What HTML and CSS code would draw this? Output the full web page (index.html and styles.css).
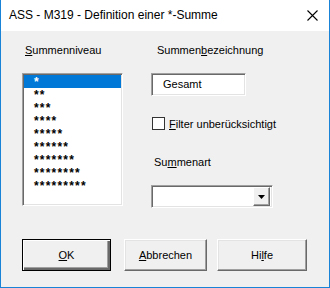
FILE: index.html
```html
<!DOCTYPE html>
<html lang="de">
<head>
  <meta charset="UTF-8">
  <title>ASS - M319</title>
  <link rel="stylesheet" href="styles.css">
</head>
<body>
  <div class="window">
    <div class="titlebar">
      <span class="title">ASS - M319 - Definition einer *-Summe</span>
      <svg class="close" width="11" height="11" viewBox="0 0 11 11">
        <path d="M0.5 0.5 L10.5 10.5 M10.5 0.5 L0.5 10.5" stroke="#000" stroke-width="1.1" fill="none"/>
      </svg>
    </div>

    <div class="client">
      <div class="main">
        <div class="col-left">
          <div class="label lbl-niveau"><u>S</u>ummenniveau</div>
          <div class="listbox">
            <div class="item selected">*</div>
            <div class="item">**</div>
            <div class="item">***</div>
            <div class="item">****</div>
            <div class="item">*****</div>
            <div class="item">******</div>
            <div class="item">*******</div>
            <div class="item">********</div>
            <div class="item">*********</div>
          </div>
        </div>

        <div class="col-right">
          <div class="label lbl-bez">Summen<u>b</u>ezeichnung</div>
          <div class="textbox">Gesamt</div>
          <label class="check">
            <span class="box"></span>
            <span><u>F</u>ilter unberücksichtigt</span>
          </label>
          <div class="label lbl-art">Su<u>m</u>menart</div>
          <div class="combo">
            <div class="combo-text"></div>
            <div class="combo-btn">
              <svg width="7" height="4" viewBox="0 0 7 4"><path d="M0 0 H7 L3.5 4 Z" fill="#000"/></svg>
            </div>
          </div>
        </div>
      </div>

      <div class="buttons">
        <div class="btn default"><span><u>O</u>K</span></div>
        <div class="btn btn-abbr"><span><u>A</u>bbrechen</span></div>
        <div class="btn btn-hilfe"><span>Hi<u>l</u>fe</span></div>
      </div>
    </div>
  </div>
</body>
</html>
```

FILE: styles.css
```css
body {
  margin: 0;
  background-color: #ffffff;
  font-family: 'Liberation Sans', Arial, sans-serif;
  font-size: 11px;
  color: #000000;
}

.window {
  width: 328px;
  height: 287px;
  border: 1px solid #1883d7;
  border-top: none;
  display: flex;
  flex-direction: column;
  background-color: #f0f0f0;
}

.titlebar {
  height: 31px;
  background-color: #ffffff;
  display: flex;
  align-items: center;
  justify-content: space-between;
  padding: 0 11px 0 8px;
}

.title {
  font-size: 12px;
  padding-bottom: 1px;
}

.client {
  flex: 1;
  display: flex;
  flex-direction: column;
  padding: 13px 0 0 21px;
}

.main {
  display: flex;
}

.label {
  height: 13px;
  line-height: 13px;
  white-space: nowrap;
}

u {
  text-decoration-thickness: 1px;
  text-underline-offset: 1px;
}

/* linke Spalte */
.col-left {
  width: 101px;
}

.lbl-niveau {
  margin-left: 3px;
  margin-bottom: 16px;
}

.listbox {
  height: 133px;
  box-sizing: border-box;
  background-color: #ffffff;
  border: 1px solid;
  border-color: #a0a0a0 #ffffff #ffffff #a0a0a0;
  box-shadow: inset 1px 1px #696969, inset -1px -1px #e3e3e3;
  padding: 1px;
}

.item {
  height: 13px;
  box-sizing: border-box;
  padding: 2px 0 0 10px;
  line-height: 11px;
  font-size: 12px;
  font-weight: bold;
  letter-spacing: 1.2px;
  white-space: nowrap;
}

.item.selected {
  background-color: #0078d7;
  color: #ffffff;
}

/* rechte Spalte */
.col-right {
  margin-left: 28px;
  width: 122px;
  display: flex;
  flex-direction: column;
}

.lbl-bez {
  margin-left: 6px;
  margin-bottom: 16px;
}

.textbox {
  width: 95px;
  height: 23px;
  box-sizing: border-box;
  background-color: #ffffff;
  border: 1px solid;
  border-color: #a0a0a0 #ffffff #ffffff #a0a0a0;
  box-shadow: inset 1px 1px #696969, inset -1px -1px #e3e3e3;
  line-height: 21px;
  padding-left: 11px;
}

.check {
  display: flex;
  align-items: center;
  margin-top: 21px;
  height: 13px;
  margin-left: 1px;
  white-space: nowrap;
}

.box {
  width: 11px;
  height: 11px;
  flex-shrink: 0;
  border: 1px solid #333333;
  background-color: #ffffff;
  margin-right: 4px;
}

.lbl-art {
  margin-top: 26px;
  margin-left: 3px;
  margin-bottom: 16px;
}

.combo {
  width: 122px;
  height: 23px;
  box-sizing: border-box;
  background-color: #ffffff;
  border: 1px solid;
  border-color: #a0a0a0 #ffffff #ffffff #a0a0a0;
  box-shadow: inset 1px 1px #696969, inset -1px -1px #e3e3e3;
  display: flex;
  padding: 2px;
  justify-content: space-between;
}

.combo-btn {
  width: 17px;
  height: 19px;
  margin: -1px 0;
  box-sizing: border-box;
  background-color: #f0f0f0;
  border: 1px solid;
  border-color: #ffffff #696969 #696969 #ffffff;
  box-shadow: inset -1px -1px #a0a0a0;
  display: flex;
  align-items: center;
  justify-content: center;
}

/* Knöpfe */
.buttons {
  display: flex;
  margin-top: 31px;
}

.btn {
  height: 32px;
  box-sizing: border-box;
  background-color: #f0f0f0;
  border: 1px solid;
  border-color: #ffffff #696969 #696969 #ffffff;
  box-shadow: inset -1px -1px #a0a0a0, inset 1px 1px #e3e3e3;
  display: flex;
  align-items: center;
  justify-content: center;
}

.btn.default {
  width: 89px;
  border: 1px solid #000000;
  box-shadow: inset 1px 1px #ffffff, inset -2px -2px #696969, inset -3px -3px #a0a0a0;
}

.btn-abbr {
  width: 83px;
  margin-left: 13px;
}

.btn-hilfe {
  width: 90px;
  margin-left: 10px;
}
```
